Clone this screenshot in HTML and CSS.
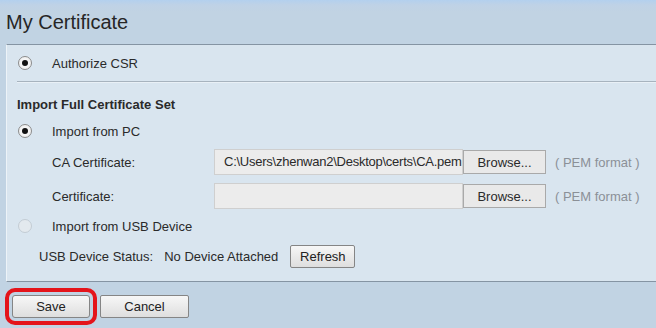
FILE: index.html
```html
<!DOCTYPE html>
<html lang="en">
<head>
    <meta charset="UTF-8">
    <title>My Certificate</title>
    <link rel="stylesheet" href="styles.css">
</head>
<body>

<div class="header">
    <h1>My Certificate</h1>
</div>

<form class="panel">
    <div class="row first">
        <input type="radio" name="mode" class="radio" checked>
        <span class="label">Authorize CSR</span>
    </div>
    <div class="divider"></div>

    <div class="section-title">Import Full Certificate Set</div>

    <div class="row pc">
        <input type="radio" name="mode2" class="radio" checked>
        <span class="label">Import from PC</span>
    </div>
    <div class="file-row ca">
        <span class="field-name">CA Certificate:</span>
        <span class="file-box">C:\Users\zhenwan2\Desktop\certs\CA.pem</span>
        <button type="button" class="browse">Browse...</button>
        <span class="hint">( PEM format )</span>
    </div>
    <div class="file-row cert">
        <span class="field-name">Certificate:</span>
        <span class="file-box"></span>
        <button type="button" class="browse">Browse...</button>
        <span class="hint">( PEM format )</span>
    </div>

    <div class="row usb">
        <input type="radio" name="mode2" class="radio" disabled>
        <span class="label">Import from USB Device</span>
    </div>
    <div class="status-row">
        <span>USB Device Status:</span>
        <span class="status-value">No Device Attached</span>
        <button type="button" class="btn refresh">Refresh</button>
    </div>
</form>

<div class="actions">
    <button type="button" class="btn save">Save</button>
    <button type="button" class="btn cancel">Cancel</button>
</div>

</body>
</html>
```

FILE: styles.css
```css
body {
    margin: 0;
    font-family: "Liberation Sans", Arial, sans-serif;
    font-size: 13px;
    color: #2a2a2a;
    background: #c1d3e3;
    height: 328px;
    overflow: hidden;
}
.header {
    height: 44px;
    background: linear-gradient(to bottom, #b3d0ee 0, #bfd2e6 5px, #c1d3e3 12px);
}
.header h1 {
    margin: 0;
    padding: 8px 0 0 6px;
    font-size: 20px;
    font-weight: normal;
    line-height: 28px;
    color: #262626;
}
.panel {
    margin: 0 0 0 6px;
    background: #d9e5ef;
    border-top: 1px solid #8594a3;
    border-bottom: 1px solid #8594a3;
    border-left: 1px solid #edf3f8;
    padding-bottom: 12px;
}
.row {
    display: flex;
    align-items: center;
    height: 24px;
}
.row.first { height: 36px; }
.row.pc { margin-top: 2px; }
.row.usb { margin-top: 4px; }
.radio {
    appearance: none;
    -webkit-appearance: none;
    box-sizing: border-box;
    width: 14px;
    height: 14px;
    margin: 0 20px 0 11px;
    border: 1px solid #8c8c8c;
    border-radius: 50%;
    background: radial-gradient(circle, #ffffff 0, #e9e9e9 100%);
    display: grid;
    place-content: center;
}
.radio:checked::before {
    content: "";
    width: 6px;
    height: 6px;
    border-radius: 50%;
    background: #111;
}
.radio:disabled {
    border-color: #c3ccd4;
    background: #e3e9ee;
}
.divider {
    margin-left: 10px;
    border-top: 1px solid #a7b3be;
    border-bottom: 1px solid #e9f0f6;
}
.section-title {
    margin: 10px 0 0 10px;
    height: 24px;
    line-height: 24px;
    font-weight: bold;
}
.file-row {
    display: flex;
    align-items: center;
    height: 28px;
    padding-left: 45px;
}
.file-row.ca { margin-top: 5px; }
.file-row.cert { margin-top: 6px; }
.field-name {
    width: 162px;
}
.file-box {
    box-sizing: border-box;
    width: 249px;
    height: 26px;
    line-height: 24px;
    padding-left: 9px;
    letter-spacing: -0.25px;
    background: #ececec;
    border: 1px solid #cfcfcf;
    white-space: nowrap;
    overflow: hidden;
}
.browse {
    box-sizing: border-box;
    width: 83px;
    height: 24px;
    padding: 0;
    font: inherit;
    color: #2a2a2a;
    background: #e9e9e9;
    border: 1px solid #a9a9a9;
}
.hint {
    margin-left: 9px;
    color: #8b9097;
}
.status-row {
    display: flex;
    align-items: center;
    height: 26px;
    margin-top: 5px;
    padding-left: 32px;
}
.status-value {
    margin-left: 11px;
}
.btn {
    box-sizing: border-box;
    height: 23px;
    padding: 0;
    font: inherit;
    color: #222;
    background: linear-gradient(to bottom, #f7f7f7, #dedede);
    border: 1px solid #858585;
    border-radius: 2px;
}
.refresh {
    width: 65px;
    margin-left: 12px;
}
.actions {
    display: flex;
    gap: 10px;
    padding: 13px 0 0 12px;
}
.save {
    width: 78px;
    border-radius: 3px;
    outline: 4px solid #e4141b;
    outline-offset: 3px;
}
.cancel {
    width: 89px;
}
```
